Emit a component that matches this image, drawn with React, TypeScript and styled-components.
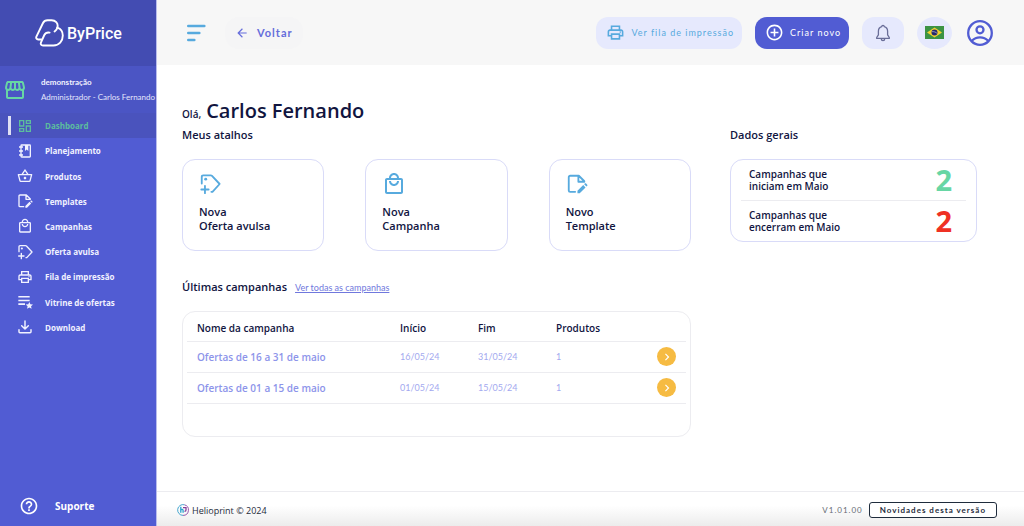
import React from "react";
import styled, { createGlobalStyle } from "styled-components";
import {
  MdOutlineDashboard,
  MdOutlineStorefront,
  MdOutlineShoppingBasket,
  MdOutlineLocalMall,
  MdOutlinePrint,
  MdHelpOutline,
  MdAddCircleOutline,
  MdArrowBack,
  MdChevronRight,
} from "react-icons/md";

const color = {
  brand: "#515cd3",
  navy: "#11153f",
  lilac: "#e6e9fd",
  sky: "#57aade",
  green: "#67d6a4",
  red: "#ef3124",
  amber: "#f6bb42",
  line: "#ececf0",
  cardLine: "#d9dbf8",
};

const controlFont = `Lato, "Open Sans", sans-serif`;

const GlobalStyle = createGlobalStyle`
  *, *::before, *::after { box-sizing: border-box; }
  body {
    margin: 0;
    background: #fff;
    color: ${color.navy};
    font-family: "Open Sans", "Noto Sans", sans-serif;
    font-size: 10px;
  }
  h1, h2, p, ul { margin: 0; padding: 0; }
  ul { list-style: none; }
  button { font-family: ${controlFont}; border: 0; cursor: pointer; padding: 0; }
  a { color: inherit; text-decoration: none; }
  svg { display: block; flex: none; }
`;

const Shell = styled.div`
  display: flex;
  min-height: 100vh;
`;

const Sidebar = styled.aside`
  flex: none;
  display: flex;
  flex-direction: column;
  width: 157px;
  background: ${color.brand};
  border-right: 1px solid #b9bdec;
  color: #fff;
`;

const Brand = styled.a`
  display: flex;
  align-items: center;
  gap: 3px;
  height: 66px;
  padding-left: 35px;
  background: #434cb2;
  font-family: Roboto, sans-serif;
  font-size: 16px;
  font-weight: 500;
`;

const Profile = styled.div`
  display: flex;
  align-items: center;
  gap: 14px;
  height: 47px;
  padding-left: 3px;
  background: #4b55c4;
  white-space: nowrap;
`;

const ProfileText = styled.div`
  font-family: ${controlFont};
  font-size: 8px;
  line-height: 15px;
  color: #e3e5fb;
  strong { display: block; color: #f1f2ff; }
`;

const Menu = styled.ul`
  display: grid;
  grid-auto-rows: 1fr;
  height: 227px;
`;

const MenuLink = styled.a<{ $active?: boolean }>`
  display: flex;
  align-items: center;
  height: 100%;
  padding-left: 8px;
  font-size: 8px;
  font-weight: 700;
  color: ${(p) => (p.$active ? "#5cbd9d" : "#f1f2ff")};
  background: ${(p) => (p.$active ? "#4a53bd" : "transparent")};
  &::before {
    content: "";
    width: 3px;
    height: 19px;
    margin-right: 6px;
    background: ${(p) => (p.$active ? "#dfe0f4" : "transparent")};
  }
  svg { margin-right: 12px; }
`;

const Support = styled.a`
  display: flex;
  align-items: center;
  gap: 16px;
  margin-top: auto;
  padding: 0 0 10px 19px;
  font-size: 10px;
  font-weight: 700;
`;

const Page = styled.div`
  flex: 1;
  min-width: 0;
  display: flex;
  flex-direction: column;
`;

const TopBar = styled.header`
  display: flex;
  align-items: center;
  gap: 13px;
  height: 65px;
  padding: 0 31px 0 29px;
  background: #f7f7f7;
`;

const IconButton = styled.button`
  display: flex;
  background: transparent;
`;

const BackButton = styled.button`
  display: flex;
  align-items: center;
  gap: 8px;
  height: 32px;
  margin: 0 auto 0 6px;
  padding: 0 10px;
  border-radius: 14px;
  background: #f5f5f6;
  color: #656ddb;
  font-size: 11px;
  font-weight: 700;
  letter-spacing: 1px;
`;

const PillButton = styled.button<{ $solid?: boolean }>`
  display: flex;
  align-items: center;
  gap: 6px;
  height: 32px;
  padding: 0 8px 0 10px;
  border-radius: 12px;
  font-size: 9px;
  letter-spacing: 1px;
  white-space: nowrap;
  background: ${(p) => (p.$solid ? color.brand : color.lilac)};
  color: ${(p) => (p.$solid ? "#fff" : color.sky)};
`;

const SoftButton = styled.button<{ $round?: boolean }>`
  display: flex;
  align-items: center;
  justify-content: center;
  width: ${(p) => (p.$round ? 35 : 42)}px;
  height: 32px;
  margin-right: ${(p) => (p.$round ? 2 : 0)}px;
  border-radius: ${(p) => (p.$round ? "50%" : "12px")};
  background: ${color.lilac};
`;

const Content = styled.main`
  flex: 1;
  padding: 34px 47px 24px 25px;
`;

const Greeting = styled.h1`
  display: flex;
  align-items: baseline;
  gap: 5px;
  font-size: 20px;
  line-height: 24px;
  font-weight: 600;
  small { font-size: 10px; line-height: 12px; }
`;

const Columns = styled.div`
  display: grid;
  grid-template-columns: minmax(0, 509fr) minmax(0, 247fr);
  gap: 39px;
`;

const Heading = styled.h2`
  font-size: 11px;
  line-height: 24px;
  font-weight: 600;
`;

const Shortcuts = styled.div`
  display: grid;
  grid-template-columns: repeat(3, minmax(0, 1fr));
  gap: 41px;
  margin-top: 12px;
`;

const Shortcut = styled.a`
  height: 92px;
  padding: 12px 16px;
  border: 1px solid ${color.cardLine};
  border-radius: 13px;
  font-size: 11px;
  line-height: 14px;
  font-weight: 600;
`;

const ShortcutIcon = styled.span`
  display: flex;
  align-items: center;
  height: 24px;
  margin-bottom: 9px;
  color: ${color.sky};
`;

const Totals = styled.ul`
  margin-top: 12px;
  padding: 0 10px;
  border: 1px solid ${color.cardLine};
  border-radius: 13px;
`;

const Total = styled.li<{ $tone: string }>`
  display: flex;
  align-items: center;
  justify-content: space-between;
  height: 40px;
  padding: 0 14px 0 8px;
  font-size: 10px;
  line-height: 12px;
  font-weight: 600;
  & + & { border-top: 1px solid ${color.line}; height: 41px; }
  strong { font-size: 29px; line-height: 32px; font-weight: 700; color: ${(p) => p.$tone}; }
`;

const ListHead = styled.div`
  display: flex;
  align-items: baseline;
  gap: 8px;
  margin: 24px 0 12px;
  a { font-family: ${controlFont}; font-size: 9px; color: #7078dd; text-decoration: underline; }
`;

const TableCard = styled.section`
  min-height: 126px;
  padding: 0 4px;
  border: 1px solid ${color.line};
  border-radius: 13px;
`;

const Table = styled.table`
  width: 100%;
  table-layout: fixed;
  border-collapse: collapse;
  text-align: left;
  th, td { height: 31px; padding: 0 10px; border-bottom: 1px solid ${color.line}; }
  thead th { height: 29px; padding-top: 3px; font-size: 10px; font-weight: 600; }
  tbody th { font-size: 10px; font-weight: 600; color: #8d94ea; }
  td { font-family: ${controlFont}; font-size: 9px; color: #a3a9ef; }
`;

const Column = styled.col<{ $width?: number }>`
  width: ${(p) => (p.$width ? `${p.$width}px` : "auto")};
`;

const OpenButton = styled.button`
  display: flex;
  align-items: center;
  justify-content: center;
  width: 19px;
  height: 19px;
  margin-left: auto;
  border-radius: 50%;
  background: ${color.amber};
  color: #fff;
`;

const Footer = styled.footer`
  display: flex;
  align-items: center;
  gap: 6px;
  height: 35px;
  padding: 2px 27px 0 20px;
  border-top: 1px solid ${color.line};
  background: linear-gradient(#fff 40%, #ececec);
`;

const Company = styled.p`
  display: flex;
  align-items: center;
  gap: 3px;
  margin-right: auto;
  font-size: 9px;
  color: #1f2c3c;
`;

const Version = styled.span`
  font-family: ${controlFont};
  font-size: 8px;
  letter-spacing: 1px;
  color: #666b75;
`;

const NewsButton = styled.button`
  height: 16px;
  padding: 0 10px;
  border: 1px solid #1f2c3c;
  border-radius: 3px;
  background: #fff;
  color: #1f2c3c;
  font-size: 8px;
  font-weight: 700;
  letter-spacing: 1px;
`;

type IconProps = { size?: number };

const BrandMark = () => (
  <svg width="29" height="29" viewBox="0 0 29 29" fill="none" stroke="#fff" strokeWidth="1.9" strokeLinecap="round" strokeLinejoin="round" aria-hidden="true">
    <path d="M6.300 20.500H3.200C1.500 20.500 .8 19 1.400 17.600L8 4C8.900 2.200 10.400 1.200 12.600 1.200h4c3.900 0 6.500 3 6 6.400-.3 2-1.300 3.600-3 4.900" />
    <path d="M22.300 8.600c3.500 1.200 5.500 4.200 5.500 7.900 0 5.800-3.800 10-9.300 10H8c-1.900 0-2.800-1.500-2-3.200l3.300-7.300c1-2 2.700-2.800 5.300-2.400" />
  </svg>
);

const NotebookIcon = ({ size = 14 }: IconProps) => (
  <svg width={size} height={size} viewBox="0 0 24 24" fill="currentColor" aria-hidden="true">
    <path d="M3 7V5h2V4a2 2 0 0 1 2-2h12a2 2 0 0 1 2 2v16a2 2 0 0 1-2 2H7a2 2 0 0 1-2-2v-1H3v-2h2v-4H3v-2h2V7H3zm4-3v1h2v2H7v4h2v2H7v4h2v2H7v1h12V4h-2v8l-2.500-2.200L12 12V4H7z" />
  </svg>
);

const FileEditIcon = ({ size = 14 }: IconProps) => (
  <svg width={size} height={size} viewBox="0 0 24 24" aria-hidden="true">
    <path d="M10 20.500H4.500a1.500 1.500 0 0 1-1.500-1.500V4.500A1.500 1.500 0 0 1 4.500 3H14l6 6M13.500 3v6.500H20" fill="none" stroke="currentColor" strokeWidth="2" strokeLinecap="round" strokeLinejoin="round" />
    <path d="M12.500 22v-2.600l6.300-6.200 2.500 2.500-6.300 6.300h-2.500zm7.300-9.800.9-.9c.3-.3.700-.3 1 0l1.500 1.500c.3.300.3.700 0 1l-.9.900-2.500-2.500z" fill="currentColor" />
  </svg>
);

const TagPlusIcon = ({ size = 14 }: IconProps) => (
  <svg width={size} height={size} viewBox="0 0 24 24" fill="none" stroke="currentColor" strokeWidth="2" strokeLinecap="round" strokeLinejoin="round" aria-hidden="true">
    <path d="M3 11.500V4a1.500 1.500 0 0 1 1.500-1.500h8.300c.6 0 1 .2 1.400.600L22.500 12l-7.800 8.500H13.500M6.500 14v8M2.500 18h8" />
    <circle cx="7.300" cy="6.700" r="1.600" fill="currentColor" stroke="none" />
  </svg>
);

const ListStarIcon = ({ size = 14 }: IconProps) => (
  <svg width={size} height={size} viewBox="0 0 24 24" fill="currentColor" aria-hidden="true">
    <path d="M2 3h17v2.400H2zM2 8.500h17v2.400H2zM2 14h10v2.400H2zM18.500 12l1.600 3.500 3.900.4-2.900 2.600.8 3.800-3.400-2-3.400 2 .8-3.800-2.900-2.600 3.900-.4z" />
  </svg>
);

const DownloadIcon = ({ size = 14 }: IconProps) => (
  <svg width={size} height={size} viewBox="0 0 24 24" fill="none" stroke="currentColor" strokeWidth="2.200" strokeLinecap="round" strokeLinejoin="round" aria-hidden="true">
    <path d="M12 3v11.500M7 10l5 5 5-5M3 16v3a1.500 1.500 0 0 0 1.500 1.500h15A1.500 1.500 0 0 0 21 19v-3" />
  </svg>
);

const MenuIcon = () => (
  <svg width="20" height="18" viewBox="0 0 20 18" stroke={color.sky} strokeWidth="2.600" strokeLinecap="round" aria-hidden="true">
    <path d="M2.300 2h16M2.300 9h11M2.300 16h6" />
  </svg>
);

const BellIcon = () => (
  <svg width="16" height="18" viewBox="0 0 16 18" fill="none" stroke="#696d98" strokeWidth="1.300" strokeLinecap="round" strokeLinejoin="round" aria-hidden="true">
    <path d="M6.800 2.600a1.200 1.200 0 0 1 2.400 0c2.200.6 3.400 2.400 3.400 4.600v3.600l1.700 2.700v.9H1.700v-.9l1.700-2.700V7.200c0-2.200 1.200-4 3.400-4.600zM6.200 14.600c.1 1.200.8 2 1.800 2s1.700-.8 1.800-2" />
  </svg>
);

const FlagIcon = () => (
  <svg width="19" height="13" viewBox="0 0 19 13" aria-hidden="true">
    <path fill="#3c9344" d="M0 0h19v13H0z" />
    <path fill="#f3d02f" d="M9.500 1.500 17 6.500l-7.500 5L2 6.500z" />
    <circle cx="9.500" cy="6.500" r="3" fill="#25276d" />
    <path d="M6.800 5.700c2-.3 4 .3 5.400 1.800" fill="none" stroke="#d7d9e8" strokeWidth=".6" />
  </svg>
);

const UserIcon = () => (
  <svg width="26" height="26" viewBox="0 0 26 26" fill="none" stroke={color.brand} strokeWidth="2.300" aria-hidden="true">
    <circle cx="13" cy="13" r="11.800" />
    <circle cx="13" cy="9.800" r="3.500" />
    <path d="M4.800 20.800C7 18.500 10 17.300 13 17.300s6 1.200 8.200 3.500" />
  </svg>
);

const CompanyIcon = () => (
  <svg width="12" height="12" viewBox="0 0 12 12" fill="none" aria-hidden="true">
    <path d="M7.500.8A5.400 5.400 0 1 0 6 11.400" stroke="#45a6cf" />
    <path d="M7.500.8A5.400 5.400 0 0 1 6 11.400" stroke="#9a55ab" />
    <path d="M3.800 2.800v6M3.800 6c1.200-1.200 2.300-.6 2.300.6v2.200" stroke="#2aa3cf" strokeWidth="1.300" />
    <path d="M6 3.700h3v2.200c0 .9-.6 1.400-1.500 1.400" stroke="#84409b" strokeWidth="1.300" />
  </svg>
);

const menu = [
  { label: "Dashboard", Icon: MdOutlineDashboard },
  { label: "Planejamento", Icon: NotebookIcon },
  { label: "Produtos", Icon: MdOutlineShoppingBasket },
  { label: "Templates", Icon: FileEditIcon },
  { label: "Campanhas", Icon: MdOutlineLocalMall },
  { label: "Oferta avulsa", Icon: TagPlusIcon },
  { label: "Fila de impressão", Icon: MdOutlinePrint },
  { label: "Vitrine de ofertas", Icon: ListStarIcon },
  { label: "Download", Icon: DownloadIcon },
];

const shortcuts = [
  { lines: ["Nova", "Oferta avulsa"], Icon: TagPlusIcon, size: 22 },
  { lines: ["Nova", "Campanha"], Icon: MdOutlineLocalMall, size: 24 },
  { lines: ["Novo", "Template"], Icon: FileEditIcon, size: 22 },
];

const totals = [
  { lines: ["Campanhas que", "iniciam em Maio"], value: 2, tone: color.green },
  { lines: ["Campanhas que", "encerram em Maio"], value: 2, tone: color.red },
];

const campaigns = [
  { name: "Ofertas de 16 a 31 de maio", start: "16/05/24", end: "31/05/24", products: 1 },
  { name: "Ofertas de 01 a 15 de maio", start: "01/05/24", end: "15/05/24", products: 1 },
];

export default function App() {
  return (
    <Shell>
      <GlobalStyle />
      <Sidebar>
        <Brand href="#">
          <BrandMark />
          ByPrice
        </Brand>
        <Profile>
          <MdOutlineStorefront size={24} color={color.green} />
          <ProfileText>
            <strong>demonstração</strong>
            Administrador - Carlos Fernando
          </ProfileText>
        </Profile>
        <nav>
          <Menu>
            {menu.map(({ label, Icon }, i) => (
              <li key={label}>
                <MenuLink href="#" $active={i === 0}>
                  <Icon size={16} />
                  {label}
                </MenuLink>
              </li>
            ))}
          </Menu>
        </nav>
        <Support href="#">
          <MdHelpOutline size={20} />
          Suporte
        </Support>
      </Sidebar>
      <Page>
        <TopBar>
          <IconButton aria-label="Menu">
            <MenuIcon />
          </IconButton>
          <BackButton>
            <MdArrowBack size={14} />
            Voltar
          </BackButton>
          <PillButton>
            <MdOutlinePrint size={19} />
            Ver fila de impressão
          </PillButton>
          <PillButton $solid>
            <MdAddCircleOutline size={19} />
            Criar novo
          </PillButton>
          <SoftButton aria-label="Notificações">
            <BellIcon />
          </SoftButton>
          <SoftButton $round aria-label="Idioma">
            <FlagIcon />
          </SoftButton>
          <IconButton aria-label="Conta">
            <UserIcon />
          </IconButton>
        </TopBar>
        <Content>
          <Greeting>
            <small>Olá,</small> Carlos Fernando
          </Greeting>
          <Columns>
            <div>
              <Heading>Meus atalhos</Heading>
              <Shortcuts>
                {shortcuts.map(({ lines, Icon, size }) => (
                  <Shortcut href="#" key={lines[1]}>
                    <ShortcutIcon>
                      <Icon size={size} />
                    </ShortcutIcon>
                    {lines[0]}
                    <br />
                    {lines[1]}
                  </Shortcut>
                ))}
              </Shortcuts>
              <ListHead>
                <Heading>Últimas campanhas</Heading>
                <a href="#">Ver todas as campanhas</a>
              </ListHead>
              <TableCard>
                <Table>
                  <colgroup>
                    <Column />
                    <Column $width={78} />
                    <Column $width={78} />
                    <Column $width={78} />
                    <Column $width={62} />
                  </colgroup>
                  <thead>
                    <tr>
                      <th scope="col">Nome da campanha</th>
                      <th scope="col">Início</th>
                      <th scope="col">Fim</th>
                      <th scope="col">Produtos</th>
                      <th aria-label="Abrir" />
                    </tr>
                  </thead>
                  <tbody>
                    {campaigns.map((c) => (
                      <tr key={c.name}>
                        <th scope="row">{c.name}</th>
                        <td>{c.start}</td>
                        <td>{c.end}</td>
                        <td>{c.products}</td>
                        <td>
                          <OpenButton aria-label={`Abrir ${c.name}`}>
                            <MdChevronRight size={14} />
                          </OpenButton>
                        </td>
                      </tr>
                    ))}
                  </tbody>
                </Table>
              </TableCard>
            </div>
            <div>
              <Heading>Dados gerais</Heading>
              <Totals>
                {totals.map((t) => (
                  <Total key={t.lines[1]} $tone={t.tone}>
                    <span>
                      {t.lines[0]}
                      <br />
                      {t.lines[1]}
                    </span>
                    <strong>{t.value}</strong>
                  </Total>
                ))}
              </Totals>
            </div>
          </Columns>
        </Content>
        <Footer>
          <Company>
            <CompanyIcon />
            Helioprint © 2024
          </Company>
          <Version>V1.01.00</Version>
          <NewsButton>Novidades desta versão</NewsButton>
        </Footer>
      </Page>
    </Shell>
  );
}
